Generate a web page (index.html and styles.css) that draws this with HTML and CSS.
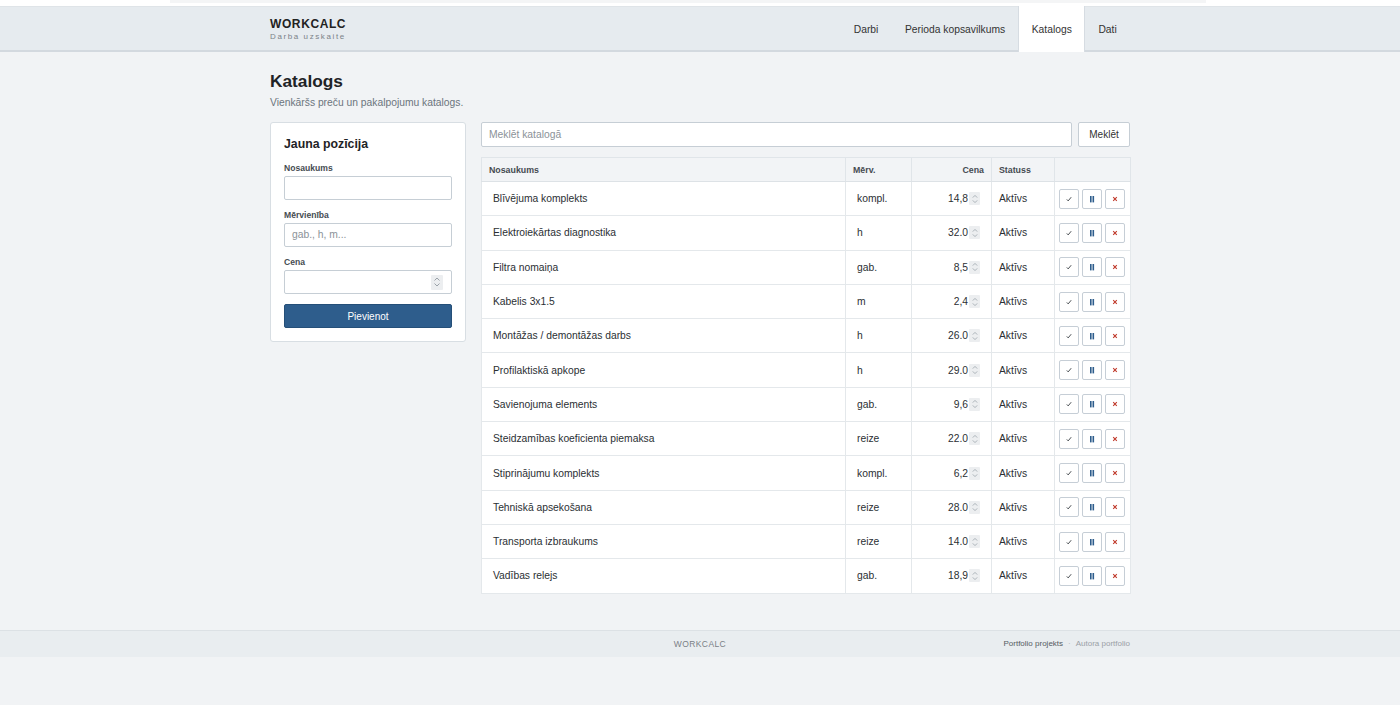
FILE: index.html
```html
<!DOCTYPE html>
<html lang="lv">
<head>
<meta charset="utf-8">
<title>WORKCALC — Katalogs</title>
<link rel="stylesheet" href="styles.css">
</head>
<body>
<div class="topstrip"><div class="topstrip-bar"></div></div>
<header class="topbar">
  <div class="container topbar-inner">
    <div class="brand">
      <div class="brand-name">WORKCALC</div>
      <div class="brand-sub">Darba uzskaite</div>
    </div>
    <nav class="nav">
      <a class="nav-item">Darbi</a>
      <a class="nav-item">Perioda kopsavilkums</a>
      <a class="nav-item active">Katalogs</a>
      <a class="nav-item">Dati</a>
    </nav>
  </div>
</header>

<main class="container main">
  <h1 class="page-title">Katalogs</h1>
  <p class="page-sub">Vienkāršs preču un pakalpojumu katalogs.</p>

  <div class="layout">
    <section class="card">
      <h2 class="card-title">Jauna pozīcija</h2>
      <label class="field-label">Nosaukums</label>
      <div class="input"></div>
      <label class="field-label">Mērvienība</label>
      <div class="input placeholder">gab., h, m...</div>
      <label class="field-label">Cena</label>
      <div class="input num"><span class="spin spin-lg"><svg viewBox="0 0 8 12" width="8" height="12"><path d="M1.5 4.5 4 2 6.5 4.5M1.5 7.5 4 10 6.5 7.5" fill="none" stroke="#9aa1a8" stroke-width="1"/></svg></span></div>
      <button class="btn-primary">Pievienot</button>
    </section>

    <section class="list">
      <div class="search">
        <div class="search-input">Meklēt katalogā</div>
        <button class="btn">Meklēt</button>
      </div>
      <table class="table">
        <thead>
          <tr>
            <th class="c-name">Nosaukums</th>
            <th class="c-unit">Mērv.</th>
            <th class="c-price">Cena</th>
            <th class="c-status">Statuss</th>
            <th class="c-act"></th>
          </tr>
        </thead>
        <tbody id="rows"></tbody>
      </table>
    </section>
  </div>
</main>

<footer class="footer">
  <div class="container footer-inner">
    <span></span>
    <span class="footer-brand">WORKCALC</span>
    <span class="footer-links"><a class="fl-main">Portfolio projekts</a><span class="dot">·</span><a class="fl-sub">Autora portfolio</a></span>
  </div>
</footer>
<div class="below"></div>

<script>
const data = [
  ["Blīvējuma komplekts","kompl.","14,8"],
  ["Elektroiekārtas diagnostika","h","32.0"],
  ["Filtra nomaiņa","gab.","8,5"],
  ["Kabelis 3x1.5","m","2,4"],
  ["Montāžas / demontāžas darbs","h","26.0"],
  ["Profilaktiskā apkope","h","29.0"],
  ["Savienojuma elements","gab.","9,6"],
  ["Steidzamības koeficienta piemaksa","reize","22.0"],
  ["Stiprinājumu komplekts","kompl.","6,2"],
  ["Tehniskā apsekošana","reize","28.0"],
  ["Transporta izbraukums","reize","14.0"],
  ["Vadības relejs","gab.","18,9"]
];
const spin = '<span class="spin"><svg viewBox="0 0 8 12" width="8" height="12"><path d="M1.8 4.6 4 2.4 6.2 4.6M1.8 7.4 4 9.6 6.2 7.4" fill="none" stroke="#a3aab1" stroke-width="0.9"/></svg></span>';
const ok = '<svg viewBox="0 0 10 10" width="10" height="10"><path d="M2.8 5.4 4.2 6.9 7.2 3.2" fill="none" stroke="#3a3f44" stroke-width="0.9"/></svg>';
const pause = '<svg viewBox="0 0 10 10" width="10" height="10"><rect x="3" y="2" width="1.6" height="6.4" fill="#2e5d8c"/><rect x="5.5" y="2" width="1.6" height="6.4" fill="#2e5d8c"/></svg>';
const del = '<svg viewBox="0 0 10 10" width="10" height="10"><path d="M3.2 3.2 6.8 6.8M6.8 3.2 3.2 6.8" fill="none" stroke="#c0392b" stroke-width="1.1"/></svg>';
document.getElementById('rows').innerHTML = data.map(r =>
  `<tr>
    <td class="c-name"><span class="cell-in">${r[0]}</span></td>
    <td class="c-unit"><span class="cell-in">${r[1]}</span></td>
    <td class="c-price"><span class="price">${r[2]}</span>${spin}</td>
    <td class="c-status">Aktīvs</td>
    <td class="c-act"><div class="acts"><button class="ab">${ok}</button><button class="ab">${pause}</button><button class="ab">${del}</button></div></td>
  </tr>`).join('');
</script>
</body>
</html>
```

FILE: styles.css
```css
* { box-sizing: border-box; }
html, body { margin: 0; padding: 0; }
body {
  font-family: "Liberation Sans", Arial, Helvetica, sans-serif;
  color: #212529;
  background: #f1f3f5;
}
.container { width: 860px; margin: 0 auto; }

.topstrip { height: 6px; background: #ffffff; }
.topstrip-bar { width: 1036px; height: 3px; margin-left: 170px; background: #f4f5f6; }

.topbar {
  background: #e6ebef;
  border-top: 1px solid #dfe4e8;
  border-bottom: 2px solid #d3d9df;
}
.topbar-inner { display: flex; justify-content: space-between; align-items: stretch; height: 43px; }
.brand { padding-top: 10px; }
.brand-name { font-size: 12px; font-weight: 700; letter-spacing: 0.6px; color: #222; line-height: 14px; }
.brand-sub { font-size: 8px; letter-spacing: 1.6px; color: #7b8288; line-height: 10px; margin-top: 1px; }
.nav { display: flex; align-items: stretch; margin-top: -1px; margin-bottom: -2px; }
.nav-item {
  display: flex; align-items: center;
  padding: 0 12.3px;
  font-size: 10.3px; color: #333;
  border-left: 1px solid transparent; border-right: 1px solid transparent;
}
.nav-item.active { background: #ffffff; border-color: #d6dce2; }

.main { padding-top: 19px; padding-bottom: 36px; }
.page-title { margin: 0; font-size: 17.3px; font-weight: 700; line-height: 20px; color: #1f2326; }
.page-sub { margin: 5px 0 0; font-size: 10.3px; color: #6c757d; line-height: 13px; }

.layout { display: grid; grid-template-columns: 196px 649px; gap: 15px; margin-top: 13px; align-items: start; }

.card {
  background: #fff;
  border: 1px solid #d8dee3;
  border-radius: 3px;
  padding: 13px 13px 13px;
}
.card-title { margin: 0 0 11px; font-size: 12.3px; font-weight: 700; line-height: 16px; color: #1f2326; }
.field-label { display: block; font-size: 8.6px; font-weight: 700; color: #464c52; line-height: 11px; margin: 0 0 2px; }
.input {
  height: 24px;
  border: 1px solid #c6ced5;
  border-radius: 2px;
  background: #fff;
  margin-bottom: 10px;
  font-size: 10.3px;
  line-height: 22px;
  padding: 0 7px;
  color: #212529;
}
.input.placeholder { color: #8b9298; }
.input.num { display: flex; justify-content: flex-end; align-items: center; padding-right: 8px; }
.btn-primary {
  display: block; width: 100%;
  height: 24px; margin-top: 1px;
  background: #2e5d8c; color: #fff;
  border: 1px solid #254f78; border-radius: 2px;
  font-family: inherit; font-size: 10px;
}

.search { display: flex; gap: 6px; }
.search-input {
  flex: 1; height: 25px;
  border: 1px solid #c6ced5; border-radius: 2px; background: #fff;
  font-size: 10.3px; line-height: 23px; padding: 0 7px; color: #8b9298;
}
.btn {
  width: 52px; height: 25px;
  background: #fff; border: 1px solid #c6ced5; border-radius: 2px;
  font-family: inherit; font-size: 10px; color: #333; padding: 0;
}

.table {
  width: 100%; margin-top: 10px;
  border-collapse: collapse;
  background: #fff;
  border: 1px solid #d5dbe0;
  table-layout: fixed;
}
.table th {
  height: 24px; background: #f2f4f6;
  font-size: 8.8px; font-weight: 700; color: #454b51;
  text-align: left; padding: 0 7px;
  border: 1px solid #e0e5e9; border-bottom-color: #dde2e6;
}
.table td {
  height: 34.3px; padding: 0 7px;
  font-size: 10.3px; color: #2b2f33;
  border: 1px solid #e4e8eb;
}
.c-name { width: 364px; }
.c-unit { width: 66px; }
.c-price { width: 80px; }
.c-status { width: 63px; }
.c-act { width: 76px; }
.table th.c-price { text-align: right; }
.table td.c-price { text-align: right; padding-right: 11px; white-space: nowrap; }
.cell-in { padding-left: 4px; }
.price { vertical-align: middle; }
.spin {
  display: inline-flex; align-items: center; justify-content: center;
  width: 11px; height: 13px; margin-left: 1px;
  background: #eceef0; border-radius: 1px; vertical-align: middle;
}
.spin-lg { width: 12px; height: 15px; }
.table td.c-act { padding: 0 4px; }
.acts { display: flex; gap: 3px; }
.ab {
  width: 20px; height: 20px; padding: 0;
  background: #fff; border: 1px solid #c6ced6; border-radius: 2px;
  display: flex; align-items: center; justify-content: center;
}
.ab svg { display: block; }

.footer { background: #e9edf0; border-top: 1px solid #dce1e5; }
.footer-inner { display: grid; grid-template-columns: 1fr auto 1fr; align-items: center; height: 26px; }
.footer-brand { font-size: 8.5px; color: #7a8086; letter-spacing: 0.4px; }
.footer-links { justify-self: end; font-size: 8px; }
.fl-main { color: #555b61; }
.dot { color: #b0b5ba; margin: 0 5px; }
.fl-sub { color: #9aa0a6; }
.below { height: 48px; background: #f1f3f5; }
```
